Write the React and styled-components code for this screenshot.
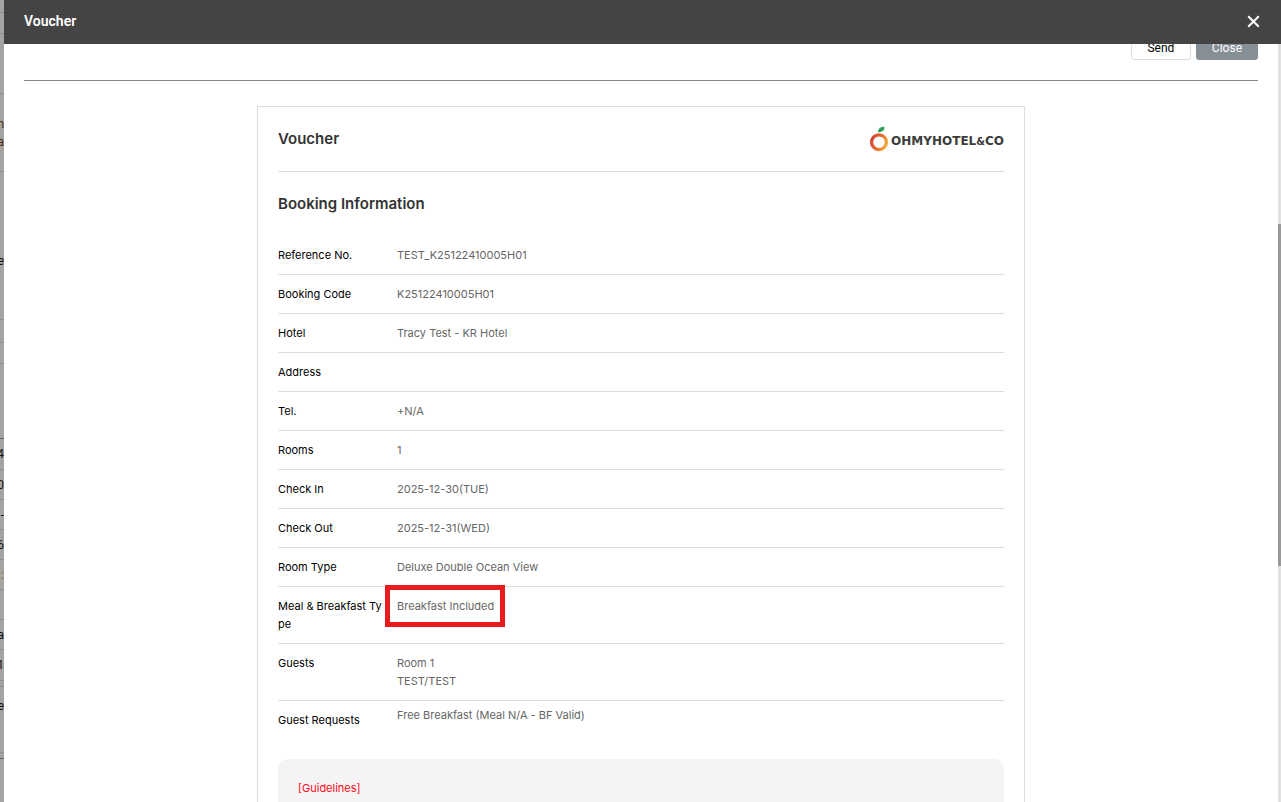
import React from "react";
import styled, { createGlobalStyle } from "styled-components";

const GlobalStyle = createGlobalStyle`
  *, *::before, *::after { box-sizing: border-box; }
  body {
    margin: 0;
    background: #fff;
    color: #000;
    font-family: Inter, "Noto Sans", sans-serif;
    font-size: 11px;
    line-height: 18px;
  }
`;

const Shell = styled.div`
  display: flex;
  height: 100vh;
  overflow: hidden;
`;

const Backdrop = styled.aside`
  flex: 0 0 4px;
  overflow: hidden;
  background: #a6a4a3;
  font-family: Roboto, sans-serif;
  font-size: 12px;
`;

const BackdropRow = styled.div`
  display: flex;
  flex-direction: column;
  justify-content: center;
  align-items: flex-end;
  height: ${(p) => p.$height}px;
  border-bottom: 1px solid ${(p) => (p.$line || "#8f8f8f")};
  color: ${(p) => p.$color || "#111"};
`;

const Modal = styled.section`
  flex: 1;
  min-width: 0;
  display: flex;
  flex-direction: column;
  background: #fff;
`;

const ModalHeader = styled.header`
  flex: 0 0 44px;
  display: flex;
  align-items: center;
  justify-content: space-between;
  padding: 0 21px 2px 20px;
  background: #444;
  color: #fff;
`;

const ModalTitle = styled.h1`
  margin: 0;
  font: 600 14px/20px Roboto, sans-serif;
`;

const IconButton = styled.button`
  display: flex;
  padding: 0;
  border: 0;
  background: none;
  color: inherit;
`;

const ModalBody = styled.div`
  flex: 1;
  min-height: 0;
  display: flex;
`;

const Content = styled.main`
  flex: 1;
  min-width: 0;
  overflow: hidden;
  padding: 0 20px;
`;

const ScrollTrack = styled.div`
  flex: 0 0 3px;
  display: flex;
  flex-direction: column;
  background: #e1e1e1;

  &::before { content: ""; flex: 180; }
  &::after { content: ""; flex: 236; }
`;

const ScrollThumb = styled.div`
  flex: 342;
  background: #999;
`;

const Toolbar = styled.div`
  display: flex;
  justify-content: flex-end;
  align-items: flex-end;
  gap: 5px;
  height: 37px;
  padding-bottom: 20px;
  overflow: hidden;
  border-bottom: 1px solid #888;
`;

const Button = styled.button`
  flex: none;
  min-width: 60px;
  height: 24px;
  padding: 0 15px;
  border: 1px solid ${(p) => (p.$filled ? "#868e96" : "#ddd")};
  border-radius: 3px;
  background: ${(p) => (p.$filled ? "#868e96" : "#fff")};
  color: ${(p) => (p.$filled ? "#fff" : "#000")};
  font: 400 12px/20px Roboto, sans-serif;
`;

const Card = styled.article`
  max-width: 768px;
  margin: 25px auto 0;
  padding: 0 20px 20px;
  border: 1px solid #ddd;
`;

const CardHeader = styled.header`
  display: flex;
  align-items: center;
  justify-content: space-between;
  height: 65px;
  border-bottom: 1px solid #ddd;
`;

const Heading = styled.h2`
  margin: 0;
  color: #333;
  font-size: 15px;
  font-weight: 600;
  line-height: 64px;
`;

const Logo = styled.div`
  display: flex;
  align-items: flex-end;
  gap: 2px;
  color: #3c3c3b;
  font: 700 12px/20px "DejaVu Sans", sans-serif;

  small { font-size: 10px; }
`;

const Details = styled.table`
  width: 100%;
  table-layout: fixed;
  border-collapse: separate;
  border-spacing: 0;
  text-align: left;
`;

const Row = styled.tr`
  &:not(:last-child) > * { border-bottom: 1px solid #ddd; }
`;

const Label = styled.th`
  width: 119px;
  padding: 10px 10px 10px 0;
  vertical-align: top;
  font-weight: 400;
  word-break: break-all;
`;

const Value = styled.td`
  position: relative;
  padding: ${(p) => (p.$tight ? 5 : 10)}px 0;
  vertical-align: top;
  color: #666;
  white-space: pre-line;
`;

const Highlight = styled.span`
  position: absolute;
  top: -2px;
  left: -12px;
  width: 120px;
  height: 42px;
  border: 5px solid #e81c1c;
`;

const Guidelines = styled.section`
  margin-top: 20px;
  padding: 20px;
  min-height: 120px;
  border-radius: 10px;
  background: #f4f4f4;
  color: #ff0a20;
`;

const backdropRows = [
  { height: 13 },
  { height: 21 },
  { height: 60 },
  { height: 78, text: ["h", "a"], color: "#4a2c10" },
  { height: 30, line: "transparent" },
  { height: 118, text: ["e"] },
  { height: 23 },
  { height: 21 },
  { height: 75, line: "#636363" },
  { height: 31, text: ["4"] },
  { height: 30, text: ["20"] },
  { height: 30, text: ["-"] },
  { height: 30, text: ["6"] },
  { height: 30, text: [":"], color: "#8a6414" },
  { height: 30 },
  { height: 30, text: ["a"] },
  { height: 31, text: ["1"] },
  { height: 6 },
  { height: 38, text: ["e"], line: "transparent" },
  { height: 28 },
  { height: 6, line: "#636363" },
];

const details = [
  { label: "Reference No.", value: "TEST_K25122410005H01" },
  { label: "Booking Code", value: "K25122410005H01" },
  { label: "Hotel", value: "Tracy Test - KR Hotel" },
  { label: "Address", value: "" },
  { label: "Tel.", value: "+N/A" },
  { label: "Rooms", value: "1" },
  { label: "Check In", value: "2025-12-30(TUE)" },
  { label: "Check Out", value: "2025-12-31(WED)" },
  { label: "Room Type", value: "Deluxe Double Ocean View" },
  { label: "Meal & Breakfast Type", value: "Breakfast Included", highlight: true },
  { label: "Guests", value: "Room 1\nTEST/TEST" },
  { label: "Guest Requests", value: "Free Breakfast (Meal N/A - BF Valid)", tight: true },
];

function CloseIcon() {
  return (
    <svg width="13" height="13" viewBox="0 0 13 13" fill="none" stroke="currentColor" strokeWidth="2" aria-hidden="true">
      <path d="M1.2 1.2 11.8 11.8M11.8 1.2 1.2 11.8" />
    </svg>
  );
}

function OrangeMark() {
  return (
    <svg width="19" height="26" viewBox="0 0 19 26" aria-hidden="true">
      <defs>
        <linearGradient id="peel" x1="0" y1="0.2" x2="1" y2="0.6">
          <stop offset="0" stopColor="#d8432f" />
          <stop offset="0.5" stopColor="#e4662f" />
          <stop offset="1" stopColor="#f3a638" />
        </linearGradient>
      </defs>
      <circle cx="9" cy="16.2" r="7.4" fill="none" stroke="url(#peel)" strokeWidth="3.2" />
      <path d="M8.1 6.2C7.900 2.800 10 .9 14.400.8c.3 3.400-1.900 5.600-6.300 5.400Z" fill="#2f9e58" />
    </svg>
  );
}

export default function App() {
  return (
    <>
      <GlobalStyle />
      <Shell>
        <Backdrop aria-hidden="true">
          {backdropRows.map((row, i) => (
            <BackdropRow key={i} $height={row.height} $line={row.line} $color={row.color}>
              {row.text?.map((t) => <span key={t}>{t}</span>)}
            </BackdropRow>
          ))}
        </Backdrop>
        <Modal aria-labelledby="modal-title">
          <ModalHeader>
            <ModalTitle id="modal-title">Voucher</ModalTitle>
            <IconButton type="button" aria-label="Close voucher">
              <CloseIcon />
            </IconButton>
          </ModalHeader>
          <ModalBody>
            <Content>
              <Toolbar>
                <Button type="button">Send</Button>
                <Button type="button" $filled>Close</Button>
              </Toolbar>
              <Card>
                <CardHeader>
                  <Heading>Voucher</Heading>
                  <Logo>
                    <OrangeMark />
                    <span>OHMYHOTEL<small>&amp;</small>CO</span>
                  </Logo>
                </CardHeader>
                <Heading as="h3">Booking Information</Heading>
                <Details>
                  <tbody>
                    {details.map((d) => (
                      <Row key={d.label}>
                        <Label scope="row">{d.label}</Label>
                        <Value $tight={d.tight}>
                          {d.value}
                          {d.highlight && <Highlight />}
                        </Value>
                      </Row>
                    ))}
                  </tbody>
                </Details>
                <Guidelines>[Guidelines]</Guidelines>
              </Card>
            </Content>
            <ScrollTrack aria-hidden="true">
              <ScrollThumb />
            </ScrollTrack>
          </ModalBody>
        </Modal>
      </Shell>
    </>
  );
}
